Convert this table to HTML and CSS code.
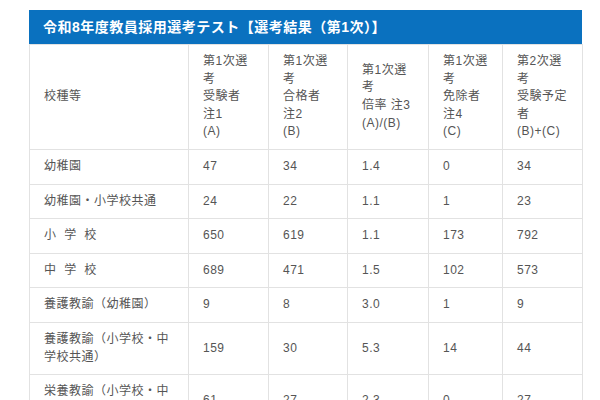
FILE: index.html
```html
<!DOCTYPE html>
<html lang="ja">
<head>
<meta charset="utf-8">
<link rel="stylesheet" href="styles.css">
</head>
<body>
<div class="wrap">
  <div class="title">令和8年度教員採用選考テスト【選考結果（第1次）】</div>
  <table class="result">
    <colgroup>
      <col class="c1"><col class="c2"><col class="c3"><col class="c4"><col class="c5"><col class="c6">
    </colgroup>
    <thead>
      <tr>
        <th>校種等</th>
        <th>第1次選考<br>受験者<br>注1<br>(A)</th>
        <th>第1次選考<br>合格者<br>注2<br>(B)</th>
        <th>第1次選考<br>倍率 注3<br>(A)/(B)</th>
        <th>第1次選考<br>免除者<br>注4<br>(C)</th>
        <th>第2次選考<br>受験予定者<br>(B)+(C)</th>
      </tr>
    </thead>
    <tbody>
      <tr><td>幼稚園</td><td>47</td><td>34</td><td>1.4</td><td>0</td><td>34</td></tr>
      <tr><td>幼稚園・小学校共通</td><td>24</td><td>22</td><td>1.1</td><td>1</td><td>23</td></tr>
      <tr><td>小&nbsp;&nbsp;学&nbsp;&nbsp;校</td><td>650</td><td>619</td><td>1.1</td><td>173</td><td>792</td></tr>
      <tr><td>中&nbsp;&nbsp;学&nbsp;&nbsp;校</td><td>689</td><td>471</td><td>1.5</td><td>102</td><td>573</td></tr>
      <tr><td>養護教諭（幼稚園）</td><td>9</td><td>8</td><td>3.0</td><td>1</td><td>9</td></tr>
      <tr><td>養護教諭（小学校・中学校共通）</td><td>159</td><td>30</td><td>5.3</td><td>14</td><td>44</td></tr>
      <tr><td>栄養教諭（小学校・中学校共通）</td><td>61</td><td>27</td><td>2.3</td><td>0</td><td>27</td></tr>
    </tbody>
  </table>
</div>
</body>
</html>
```

FILE: styles.css
```css
html, body {
  margin: 0;
  padding: 0;
  background: #ffffff;
}
body {
  font-family: "Liberation Sans", "Noto Sans CJK JP", sans-serif;
  color: #555555;
}
.wrap {
  margin: 10px 0 0 29px;
  width: 553px;
}
.title {
  background: #0a71bf;
  color: #ffffff;
  font-weight: bold;
  font-size: 14px;
  letter-spacing: 0.5px;
  height: 34px;
  line-height: 34px;
  padding-left: 14px;
  box-sizing: border-box;
}
.result {
  width: 553px;
  border-collapse: collapse;
  table-layout: fixed;
  font-size: 12px;
  letter-spacing: 0.5px;
}
.c1 { width: 159px; }
.c2 { width: 80px; }
.c3 { width: 79px; }
.c4 { width: 81px; }
.c5 { width: 74px; }
.c6 { width: 80px; }
.result th,
.result td {
  border: 1px solid #e2e2e2;
  padding: 8px 14px;
  line-height: 17.6px;
  text-align: left;
  vertical-align: middle;
  font-weight: normal;
}
.result thead th {
  height: 88px;
}
```
